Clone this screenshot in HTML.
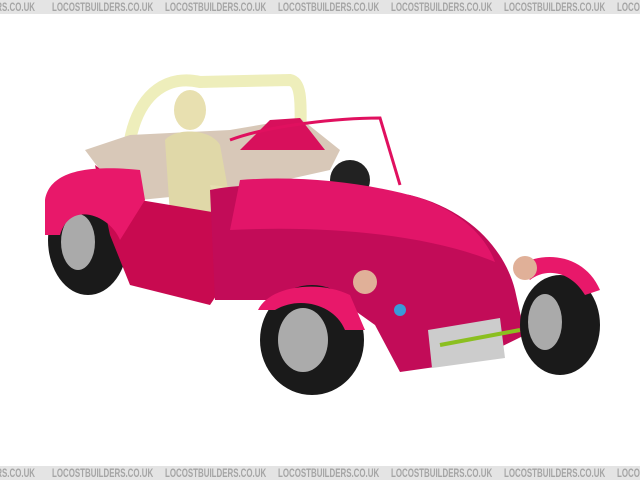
<!DOCTYPE html>
<html><head><style>
html,body{margin:0;padding:0;background:#fff;width:640px;height:480px;overflow:hidden}
.band{position:absolute;left:0;width:640px;height:14px;background:#e4e4e4;overflow:hidden}
.band span{position:absolute;top:0;color:#a5a5a5;font:bold 12px "Liberation Sans",sans-serif;line-height:14px;white-space:nowrap;transform:scaleX(0.66);transform-origin:0 0}
</style></head><body>
<div class="band" style="top:0"><span style="left:-9px">ERS.CO.UK</span><span style="left:52px">LOCOSTBUILDERS.CO.UK</span><span style="left:165px">LOCOSTBUILDERS.CO.UK</span><span style="left:278px">LOCOSTBUILDERS.CO.UK</span><span style="left:391px">LOCOSTBUILDERS.CO.UK</span><span style="left:504px">LOCOSTBUILDERS.CO.UK</span><span style="left:617px">LOCOSTBUILDERS.CO.UK</span></div>
<div class="band" style="top:466px"><span style="left:-9px">ERS.CO.UK</span><span style="left:52px">LOCOSTBUILDERS.CO.UK</span><span style="left:165px">LOCOSTBUILDERS.CO.UK</span><span style="left:278px">LOCOSTBUILDERS.CO.UK</span><span style="left:391px">LOCOSTBUILDERS.CO.UK</span><span style="left:504px">LOCOSTBUILDERS.CO.UK</span><span style="left:617px">LOCOSTBUILDERS.CO.UK</span></div>
<svg width="640" height="480" style="position:absolute;left:0;top:0">
<ellipse cx="350" cy="180" rx="20" ry="20" fill="#222"/>
<ellipse cx="88" cy="240" rx="40" ry="55" fill="#1a1a1a"/>
<ellipse cx="78" cy="242" rx="17" ry="28" fill="#aaa"/>
<path d="M130,140 C140,90 170,75 200,82 L290,80 C300,82 302,95 300,140" fill="none" stroke="#eeeebb" stroke-width="12"/>
<path d="M85,150 L130,135 L230,130 L300,118 L340,150 L330,170 L240,190 L140,200 L100,170 Z" fill="#d8c8b8"/>
<path d="M240,150 L270,120 L300,118 L325,150 Z" fill="#d8105c"/>
<ellipse cx="190" cy="110" rx="16" ry="20" fill="#e8e0b0"/>
<path d="M165,140 C175,128 210,128 220,145 L230,200 L200,220 L170,215 Z" fill="#e0d8a8"/>
<path d="M210,185 L260,190 L270,200 L215,200 Z" fill="#e6dfb0"/>
<path d="M95,165 L140,200 L230,215 L240,260 L210,305 L130,285 L110,235 Z" fill="#c80a50"/>
<path d="M45,200 C50,170 90,165 140,170 L145,200 L120,240 C110,215 70,200 60,235 L45,235 Z" fill="#e8186a"/>
<path d="M210,190 C260,180 340,185 410,195 C470,210 505,250 515,290 L525,335 L470,362 L400,372 L375,325 L340,300 L260,300 L215,300 Z" fill="#c20c58"/>
<path d="M240,180 C300,175 370,183 420,198 C460,212 485,235 495,262 C430,235 330,225 230,230 Z" fill="#e21569"/>
<path d="M230,140 C270,125 340,118 380,118 L400,185" fill="none" stroke="#e0105f" stroke-width="3"/>
<path d="M428,330 L500,318 L505,358 L432,368 Z" fill="#ccc"/>
<path d="M440,345 L520,330" stroke="#8bbf20" stroke-width="4"/>
<ellipse cx="560" cy="325" rx="40" ry="50" fill="#1a1a1a"/>
<ellipse cx="545" cy="322" rx="17" ry="28" fill="#aaa"/>
<path d="M520,265 C545,250 585,255 600,290 L585,295 C570,270 545,268 530,280 Z" fill="#e8186a"/>
<ellipse cx="312" cy="340" rx="52" ry="55" fill="#1a1a1a"/>
<ellipse cx="303" cy="340" rx="25" ry="32" fill="#ababab"/>
<path d="M258,310 C270,285 320,280 350,295 L365,330 L345,330 C335,305 300,295 275,310 Z" fill="#e8186a"/>
<circle cx="365" cy="282" r="12" fill="#e0b098"/>
<circle cx="525" cy="268" r="12" fill="#e0b098"/>
<circle cx="400" cy="310" r="6" fill="#3a9ad8"/>
</svg>
</body></html>
